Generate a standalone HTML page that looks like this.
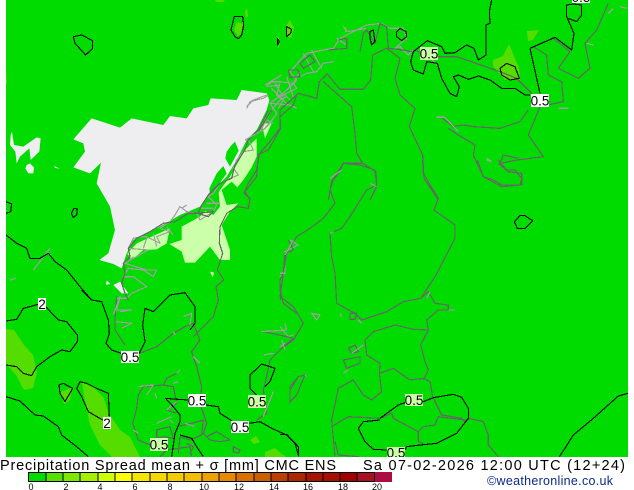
<!DOCTYPE html>
<html><head><meta charset="utf-8"><style>
html,body{margin:0;padding:0;background:#fff;width:634px;height:490px;overflow:hidden}
svg{display:block;position:absolute;left:0;top:0}
.k{fill:none;stroke:#000;stroke-width:1.1;vector-effect:non-scaling-stroke;stroke-linejoin:round;shape-rendering:crispEdges}
.b{fill:none;stroke:#666;stroke-width:1.2;vector-effect:non-scaling-stroke;stroke-linejoin:round;shape-rendering:crispEdges}
.c{fill:none;stroke:#a0a0a0;stroke-width:1.2;vector-effect:non-scaling-stroke;stroke-linejoin:round;shape-rendering:crispEdges}
.l{fill:#fff}.p{fill:#ccffaa}
.t{font-family:"Liberation Sans",sans-serif;font-size:13.5px;fill:#000;text-anchor:middle}
.s{font-family:"Liberation Sans",sans-serif;font-size:9px;fill:#000;text-anchor:middle}
.h{font-family:"Liberation Sans",sans-serif;font-size:14.5px;fill:#000}
</style></head><body>
<svg width="634" height="490" viewBox="0 0 634 490">
<rect x="6" y="0" width="622" height="457" fill="#00dc00"/>

<!-- mid-green patches -->
<g fill="#55dd00">
<path d="M6 329L14 330L24 345L33 355L37 372L33 388L24 390L16 375L6 364Z"/>
<path d="M82 382L94 388L104 398L108 412L120 430L130 437L140 457L112 457L100 445L90 425L87 410L84 396Z"/>
<path d="M60 392L72 388L70 400L64 404Z"/>
<path d="M237 22L243 24L243 32L238 36L234 30Z"/>
<path d="M247 8L248 16L246 18L245 12Z"/>
<path d="M290 20L294 28L291 38L286 36L286 26Z"/>
<path d="M278 34L280 44L278 48L277 40Z"/>
<path d="M215 0L225 0L223 2L216 2Z"/>
<path d="M509 44L519 68L520 80L505 80L493 66L493 60L503 56Z"/>
<path d="M527 31L539 30L533 40L528 41Z"/>
<path d="M345 26L347 30L345 32Z"/>
<path d="M250 440L256 436L260 442L254 444Z"/>
<path d="M265 452L275 448L285 457L265 457Z"/>
<path d="M280 454L286 456L284 457L280 457Z"/>
<path d="M6 68L7 84L6 84Z"/>
</g>

<!-- grey region -->
<g transform="translate(0,80) scale(.33333)">
<path fill="#eeeef0" d="M725 30L800 40L808 60L800 90L770 150L740 180L710 240L680 290L630 340L600 380L540 405L480 440L400 480L380 520L365 565L340 552L298 540L325 520L345 450L330 380L290 310L303 248L270 280L220 262L255 215L250 190L220 178L275 115L360 143L395 115L490 135L510 108L560 115L580 85L625 75L632 55L710 60Z"/>
<path fill="#eeeef0" d="M36 155L42 195L70 200L110 172L122 175L118 215L92 240L88 205L60 230L50 250L46 215L30 195L32 165Z"/>
<path fill="#eeeef0" d="M90 250L102 262L100 280L85 280L76 265L80 255Z"/>
<path fill="#eeeef0" d="M162 258L180 266L165 264Z"/>
<path fill="#fff" d="M320 602L332 612L318 614Z"/>
<path fill="#eeeef0" d="M340 615L360 605L385 640L365 640Z"/>
<path fill="#fff" d="M115 655L138 655L138 660L115 660Z"/>
<!-- pale green area -->
<path class="p" d="M770 175L770 230L755 262L730 300L712 322L695 305L665 330L680 375L715 370L690 395L665 435L690 510L690 540L660 540L630 500L585 548L555 548L545 515L508 492L545 480L545 440L600 410L640 370L660 330L690 290L735 210Z"/>
<path class="p" d="M410 490L510 445L500 490L470 508L430 510L395 540L382 520Z"/>
<path class="p" d="M785 130L815 130L795 175Z"/>
<path class="p" d="M630 575L642 578L638 592Z"/>
<!-- green patches over -->
<path fill="#00dc00" d="M695 195L705 185L716 212L690 260L676 235L680 215Z"/>
<path fill="#00dc00" d="M670 258L680 280L650 322L630 345L628 325L650 280Z"/>
<path fill="#00dc00" d="M625 345L655 330L660 380L640 405L612 390L615 370Z"/>
<!-- coast -->
<path class="c" d="M740 85L750 65L790 55L805 45M800 20L815 5L840 5L880 10L890 25L860 40L830 55L810 70L830 100L810 130L790 150L760 165L745 180L760 210L730 215L710 240L700 265L715 285L690 295L660 310L640 340L625 350L650 375L640 395L600 420L590 400L560 395L540 380L525 405L510 425L480 445L510 455L470 470L480 490L440 470L425 470L400 475L385 505L445 510L400 535L375 550L440 570L470 570L460 590L430 570L385 565L370 590L400 590L440 620L395 640L380 655L350 655"/>
<path class="c" d="M810 70L870 75L890 85M855 45L870 60M820 130L790 115M620 370L660 370M100 570L150 505M30 600L48 595M870 480L895 495L855 515L855 580L840 590M815 25L850 60L835 85M840 10L830 45L860 70M790 150L820 115M745 180L765 160M460 460L470 500M500 440L520 465M440 475L430 505M600 385L640 385M545 385L560 375M385 545L400 530"/>
<!-- borders -->
<path class="b" d="M805 90L795 110L775 150L745 180L735 210L705 255L695 295L660 310L625 345L605 375L595 400L625 410L640 395L590 400L565 400L525 425L490 430L450 455L410 475L385 505L390 530L370 550L375 580L365 610L375 640L385 660"/>
<path class="b" d="M890 45L880 75L840 110L842 145L805 210L778 222L770 270L745 310L732 340L750 355L745 385L712 380L680 400L660 440L658 490L668 520L652 570L672 600L648 620L655 660"/>
<path class="b" d="M865 480L880 510L855 520L850 580L840 600L842 660"/>
<!-- small NW contours -->
<path class="k" d="M18 365L35 372L32 395L18 400"/>
<path class="k" d="M222 385L232 387L230 405L220 412L214 400Z"/>
<path class="k" d="M18 465L50 490L65 497L80 505L90 535L120 535L145 520L165 545L200 570L240 620L275 660"/>
</g>

<!-- top-left contour -->
<g transform="scale(.33333)">
<path class="k" d="M220 110L245 105L278 122L278 145L257 165L225 130Z"/>
</g>

<!-- north coast + borders (zoom-4 space) -->
<g transform="translate(200,0) scale(.33333)">
<path class="c" d="M140 320L160 300L200 285M195 255L220 240L245 225M225 300L260 270L290 240L270 215L320 160L370 150L400 145L420 115L470 90L500 75L545 70L570 85L610 85L620 115L585 145L600 140L625 165L640 150L690 170L715 200M400 185L370 190L350 215L320 220L300 230M430 80L440 95M135 420L180 395L215 330L240 300L260 290"/>
<path class="c" d="M310 160L340 215M335 150L365 205M225 250L250 290M260 230L280 290M410 115L440 135M440 95L500 85M205 260L240 255M280 250L300 215"/>
<path class="b" d="M178 390L215 330M265 210L295 210L300 230L270 232ZM300 190L330 165L345 185L310 205ZM385 150L440 145L440 115L415 120M480 155L490 100L500 90L525 130L540 70L560 80L565 145L610 150L635 155"/>
<path class="b" d="M240 330L295 280L350 295L358 245L382 222L420 268L490 268L512 240L518 165L560 145L600 175L585 235L600 285L645 325L628 380L668 465L672 535L715 600"/>
<path class="b" d="M370 245L415 285L455 320L465 400L470 460L488 490L430 490L395 545L385 600M488 490L528 515L530 560L510 600"/>
<path class="b" d="M240 330L240 385L205 430L175 465L170 530L135 575L150 600M640 150L700 170L770 170L900 215L950 235L990 275L1020 320L985 405L1030 470L950 480L900 490L910 465L955 475M1020 320L1090 305L1085 245L1045 225L1040 165L1000 140L1060 115L1110 155L1075 205L1135 235L1170 205L1155 130L1190 90L1225 10"/>
<path class="b" d="M985 330L960 365L900 385L820 380L790 375L760 380L720 350M745 385L775 405L825 435L820 465L850 530L880 540L905 555L965 555L965 520L925 515L895 490"/>
<path class="c" d="M710 352L735 352L775 395M1075 325L1105 325M1160 130L1180 135M1225 40L1240 25M1260 20L1280 25M860 475L875 485"/>
<!-- contours -->
<path class="k" d="M103 50L128 50L131 75L125 105L115 116L105 110L93 90Z"/>
<path class="k" d="M260 80L275 88L272 100L260 110Z"/>
<path class="k" fill="#000" d="M232 115L238 125L233 135Z"/>
<path class="k" d="M510 95L520 90L525 125L515 135L510 115Z"/>
<path class="k" d="M600 85L618 95L620 110L605 122L590 110L590 95Z"/>
<path class="k" d="M875 0L868 35L870 70L858 75L858 165L835 180L822 145L800 135L765 158L735 160L725 140L682 122L640 155L632 185L640 210L670 222L680 185L712 190L725 235L750 280L770 290L778 260L760 230L775 225L805 238L835 228L870 240L905 265L945 265L975 285L990 285"/>
<path class="k" d="M990 145L1020 280M990 145L1065 112L1115 150L1122 100L1100 50L1100 15L1120 12L1145 15L1145 45L1130 65L1105 55"/>
<path class="k" d="M920 190L945 200L958 235L930 240L905 225L900 205Z"/>
</g>

<!-- Central, east (zoom-6 space) -->
<g transform="translate(280,160) scale(.33333)">
<path class="b" d="M428 0L430 40L450 75L475 115L462 150L525 195L525 235L468 345L422 415L370 425L320 455L245 480L225 460L170 430L165 340L155 290L150 220L185 205L210 170L260 90L290 75L285 30L240 15L190 10L175 40L160 60L150 90L165 130L130 175L90 205L50 230L20 275L10 340L0 410L40 440L70 490L40 540L0 570"/>
<path class="b" d="M592 0L610 50L665 80L720 75L725 55L705 30L680 30L655 0M422 415L445 395L465 430L505 435L505 450L475 450L440 480L445 510L400 508L345 495L280 515L255 540L260 585L300 610L298 640L340 625L390 660L430 655L450 665L458 710L485 765L545 775L555 785L565 775L610 785L625 825L625 855L655 890"/>
<path class="b" d="M445 510L422 555L435 605L445 630L430 660M298 640L305 695L275 720L250 705L220 660L175 685L155 780L165 890M155 800L205 770L300 775L335 760L340 775L415 815L430 800L465 795L475 770L555 780M415 815L415 845L430 850M165 845L175 885L235 890M30 725L30 690L55 650L75 645L50 705Z"/>
<path class="b" d="M190 600L240 590L240 610L200 625ZM205 565L225 555L235 575L215 580ZM210 460L230 460L225 478L210 478Z"/>
<path class="c" d="M150 220L160 215M270 70L290 80M150 55L185 30M0 340L15 340M15 285L40 240M95 460L120 465L110 480ZM0 500L25 530L40 525M0 560L15 550M190 640L205 630M215 580L250 555M180 460L185 470M620 0L635 5M450 395L440 415M505 450L525 450M235 480L245 490M75 645L80 650"/>
<path class="k" d="M703 185L720 167L735 167L758 182L735 205L712 205Z"/>
<path class="k" d="M300 775L355 735L375 728M430 725L460 713L520 703L545 712L565 745L565 775L530 820L470 850L420 855L380 860L375 870M320 870L280 868L255 845L235 805L250 785L300 780"/>
<path class="k" d="M1044 700L1015 708L940 775L880 825L858 860L838 890"/>
<path class="k" d="M0 823L20 823L55 860L55 890"/>
</g>

<!-- South-west (zoom-5 space) -->
<g transform="translate(0,290) scale(.33333)">
<path class="b" d="M375 165L345 120L345 85L350 20M418 190L470 170L520 130L555 110L580 100L600 150L575 185L590 230L605 290L600 340L620 400L610 430L630 450L660 455M530 250L500 265L490 285L430 290L415 315L410 355L398 400L415 450L450 465L505 470M490 285L520 290L530 340L500 360L530 370M530 410L575 400L610 390L605 435L570 450L540 440L535 490M580 140L640 80L655 30L650 0M470 420L510 410L520 445L490 440L470 445ZM620 440L650 425L690 450L660 455L630 450ZM700 470L720 480L715 490L700 485ZM480 500L500 480L570 470L575 500M560 460L580 470L570 490M840 0L850 40L890 70M790 125L860 140L880 145L850 170L810 210L800 260L790 300L800 370L770 390M870 340L870 290L895 260"/>
<path class="c" d="M340 75L360 20L350 60L395 60L360 65M350 95L395 100L365 115M415 290L460 285L440 315M465 310L470 325M550 80L575 70L570 105M530 250L540 240M520 280L535 275M580 200L600 220M400 420L415 430M500 360L530 335M470 400L515 380M510 390L520 400M555 400L585 410M790 195L820 190M785 125L860 120L855 100M845 150L855 180M790 380L820 305M520 125L525 135"/>
<path class="k" d="M18 93L50 88L70 55L115 43M137 50L175 90L200 95L232 135L232 155L210 185L185 180L150 200L110 230L95 257L70 250L50 230L18 225"/>
<path class="k" d="M18 320L60 333L105 375L130 378L175 410L185 435L230 470L265 500"/>
<path class="k" d="M177 285L190 280L218 295L195 335L180 310Z"/>
<path class="k" d="M308 390L265 365L245 320L230 295L240 275L260 280L290 295L325 310L328 380"/>
<path class="k" d="M245 0L275 30L305 35L325 90L328 130L318 160L335 180L365 190M418 190L435 155L428 105L435 55L460 65L510 15L555 8L585 50L585 100L570 120"/>
<path class="k" d="M565 330L520 327L497 325L520 350L540 375L540 395L525 430L515 500"/>
<path class="k" d="M618 345L655 350L660 370L695 392M748 400L780 395L815 415L860 435L885 460L895 495"/>
<path class="k" d="M770 315L750 295L750 255L785 222L825 235L810 275L795 290M770 315L770 320"/>
<path class="k" d="M540 435L575 445L590 470L610 500"/>
</g>

<!-- Labels -->
<rect class="p" x="420" y="47" width="18" height="13"/><text class="t" x="429" y="58.500">0.5</text>
<rect class="l" x="531" y="94" width="18" height="13"/><text class="t" x="540" y="105.500">0.5</text>
<rect class="l" x="572" y="0" width="18" height="3"/><text class="t" x="581" y="2">0.5</text>
<rect class="l" x="38" y="298" width="8" height="12"/><text class="t" x="42" y="309">2</text>
<rect class="l" x="121" y="351" width="18" height="12"/><text class="t" x="130" y="362">0.5</text>
<rect class="l" x="188" y="394" width="18" height="13"/><text class="t" x="197" y="405.500">0.5</text>
<rect class="p" x="248" y="395" width="18" height="13"/><text class="t" x="257" y="406.500">0.5</text>
<rect class="l" x="231" y="421" width="18" height="12"/><text class="t" x="240" y="432">0.5</text>
<rect class="l" x="103" y="417" width="8" height="12"/><text class="t" x="107" y="428">2</text>
<rect class="p" x="150" y="438" width="18" height="13"/><text class="t" x="159" y="449.500">0.5</text>
<rect class="p" x="405" y="394" width="18" height="12"/><text class="t" x="414" y="405">0.5</text>
<rect class="p" x="387" y="447" width="18" height="10"/><text class="t" x="396" y="457.500">0.5</text>
<rect x="0" y="457" width="634" height="33" fill="#fff"/>

<!-- Title -->
<text class="h" x="0" y="470" textLength="336" lengthAdjust="spacing">Precipitation Spread mean + σ [mm] CMC ENS</text>
<text class="h" x="363" y="470" textLength="262" lengthAdjust="spacing">Sa 07-02-2026 12:00 UTC (12+24)</text>

<!-- Colour bar -->
<g shape-rendering="crispEdges">
<rect x="28" y="472" width="18" height="10" fill="#00dc00"/>
<rect x="46" y="472" width="17" height="10" fill="#55e000"/>
<rect x="63" y="472" width="17" height="10" fill="#7de800"/>
<rect x="80" y="472" width="18" height="10" fill="#a5f000"/>
<rect x="98" y="472" width="17" height="10" fill="#ccff00"/>
<rect x="115" y="472" width="17" height="10" fill="#fbff00"/>
<rect x="132" y="472" width="18" height="10" fill="#f5e600"/>
<rect x="150" y="472" width="17" height="10" fill="#f5d800"/>
<rect x="167" y="472" width="17" height="10" fill="#f5cc00"/>
<rect x="184" y="472" width="18" height="10" fill="#f5bd00"/>
<rect x="202" y="472" width="17" height="10" fill="#f0a000"/>
<rect x="219" y="472" width="17" height="10" fill="#e68a00"/>
<rect x="236" y="472" width="18" height="10" fill="#d97000"/>
<rect x="254" y="472" width="17" height="10" fill="#c86000"/>
<rect x="271" y="472" width="17" height="10" fill="#b84000"/>
<rect x="288" y="472" width="18" height="10" fill="#aa2a00"/>
<rect x="306" y="472" width="17" height="10" fill="#a51500"/>
<rect x="323" y="472" width="17" height="10" fill="#a51000"/>
<rect x="340" y="472" width="17" height="10" fill="#a00000"/>
<rect x="357" y="472" width="17" height="10" fill="#a81020"/>
<rect x="374" y="472" width="18" height="10" fill="#ac0c44"/>
<path fill="none" stroke="#000" d="M28.5 472.5H374.5V481.5H28.5ZM46 472V482M63 472V482M80 472V482M98 472V482M115 472V482M132 472V482M150 472V482M167 472V482M184 472V482M202 472V482M219 472V482M236 472V482M254 472V482M271 472V482M288 472V482M306 472V482M323 472V482M340 472V482M357 472V482"/>
</g>
<g>
<text class="s" x="31" y="490">0</text><text class="s" x="66" y="490">2</text><text class="s" x="100" y="490">4</text><text class="s" x="135" y="490">6</text><text class="s" x="170" y="490">8</text><text class="s" x="204" y="490">10</text><text class="s" x="239" y="490">12</text><text class="s" x="274" y="490">14</text><text class="s" x="308" y="490">16</text><text class="s" x="343" y="490">18</text><text class="s" x="377" y="490">20</text>
</g>
<text x="487" y="485" font-family="Liberation Sans,sans-serif" font-size="12.5" fill="#0a2a8c" textLength="126" lengthAdjust="spacing">©weatheronline.co.uk</text>
</svg>
</body></html>
